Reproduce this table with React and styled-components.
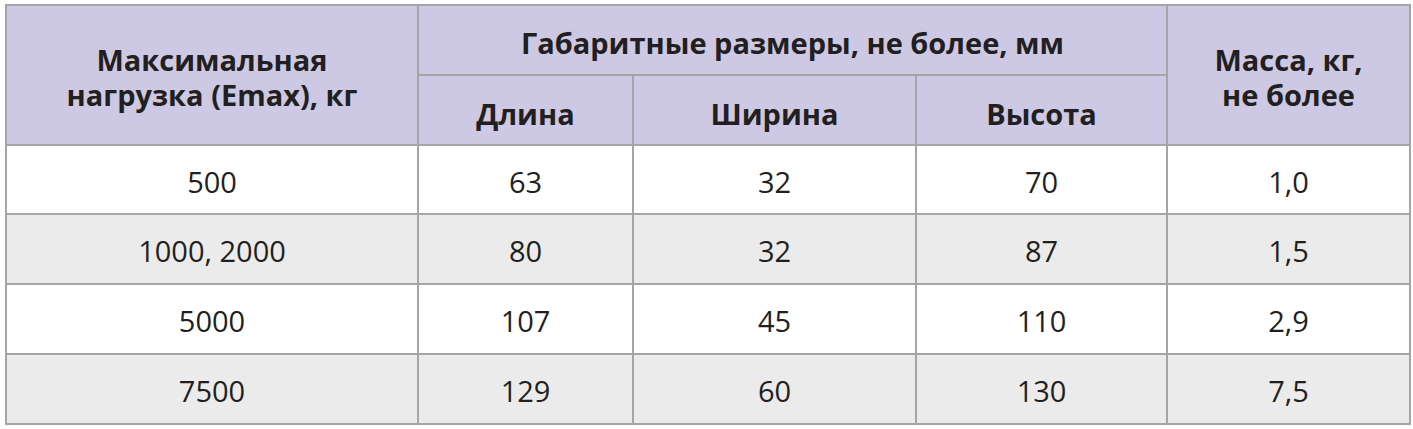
import React from 'react'
import styled, { createGlobalStyle } from 'styled-components'

const GlobalStyle = createGlobalStyle`
  html, body {
    margin: 0;
    padding: 0;
    background: #fff;
  }
`

const Page = styled.div`
  padding: 4px 4px 0 5px;
  font-family: 'Open Sans', 'Liberation Sans', sans-serif;
  color: #231f20;
`

const Table = styled.table`
  width: 1404px;
  border-collapse: collapse;
  table-layout: fixed;
  border: 2px solid #a5a5a5;
`

const HeadCell = styled.th`
  background: #cdc9e4;
  border: 2px solid #a5a5a5;
  font-weight: 700;
  font-size: 29px;
  line-height: 35px;
  height: 70px;
  padding: ${(p) => (p.$sub ? '6px 0 0' : '4px 0 0')};
  text-align: center;
  vertical-align: middle;
  box-sizing: border-box;
`

const Row = styled.tr`
  background: ${(p) => (p.$alt ? '#ebebeb' : '#fff')};
`

const Cell = styled.td`
  border: 2px solid #a5a5a5;
  font-size: 29px;
  height: ${(p) => p.$h || 70}px;
  padding: 3px 0 0;
  box-sizing: border-box;
  text-align: center;
  vertical-align: middle;
  font-weight: 400;
`

const rows = [
  ['500', '63', '32', '70', '1,0'],
  ['1000, 2000', '80', '32', '87', '1,5'],
  ['5000', '107', '45', '110', '2,9'],
  ['7500', '129', '60', '130', '7,5'],
]

const App = () => (
  <Page>
    <GlobalStyle />
    <Table>
      <colgroup>
        <col style={{ width: 412 }} />
        <col style={{ width: 215 }} />
        <col style={{ width: 283 }} />
        <col style={{ width: 251 }} />
        <col style={{ width: 243 }} />
      </colgroup>
      <thead>
        <tr>
          <HeadCell rowSpan={2}>
            Максимальная
            <br />
            нагрузка (Emax), кг
          </HeadCell>
          <HeadCell colSpan={3}>Габаритные размеры, не более, мм</HeadCell>
          <HeadCell rowSpan={2}>
            Масса, кг,
            <br />
            не более
          </HeadCell>
        </tr>
        <tr>
          <HeadCell $sub>Длина</HeadCell>
          <HeadCell $sub>Ширина</HeadCell>
          <HeadCell $sub>Высота</HeadCell>
        </tr>
      </thead>
      <tbody>
        {rows.map((r, i) => (
          <Row key={r[0]} $alt={i % 2 === 1}>
            {r.map((v, j) => (
              <Cell key={j} $h={i === 0 ? 69 : 70}>
                {v}
              </Cell>
            ))}
          </Row>
        ))}
      </tbody>
    </Table>
  </Page>
)

export default App
